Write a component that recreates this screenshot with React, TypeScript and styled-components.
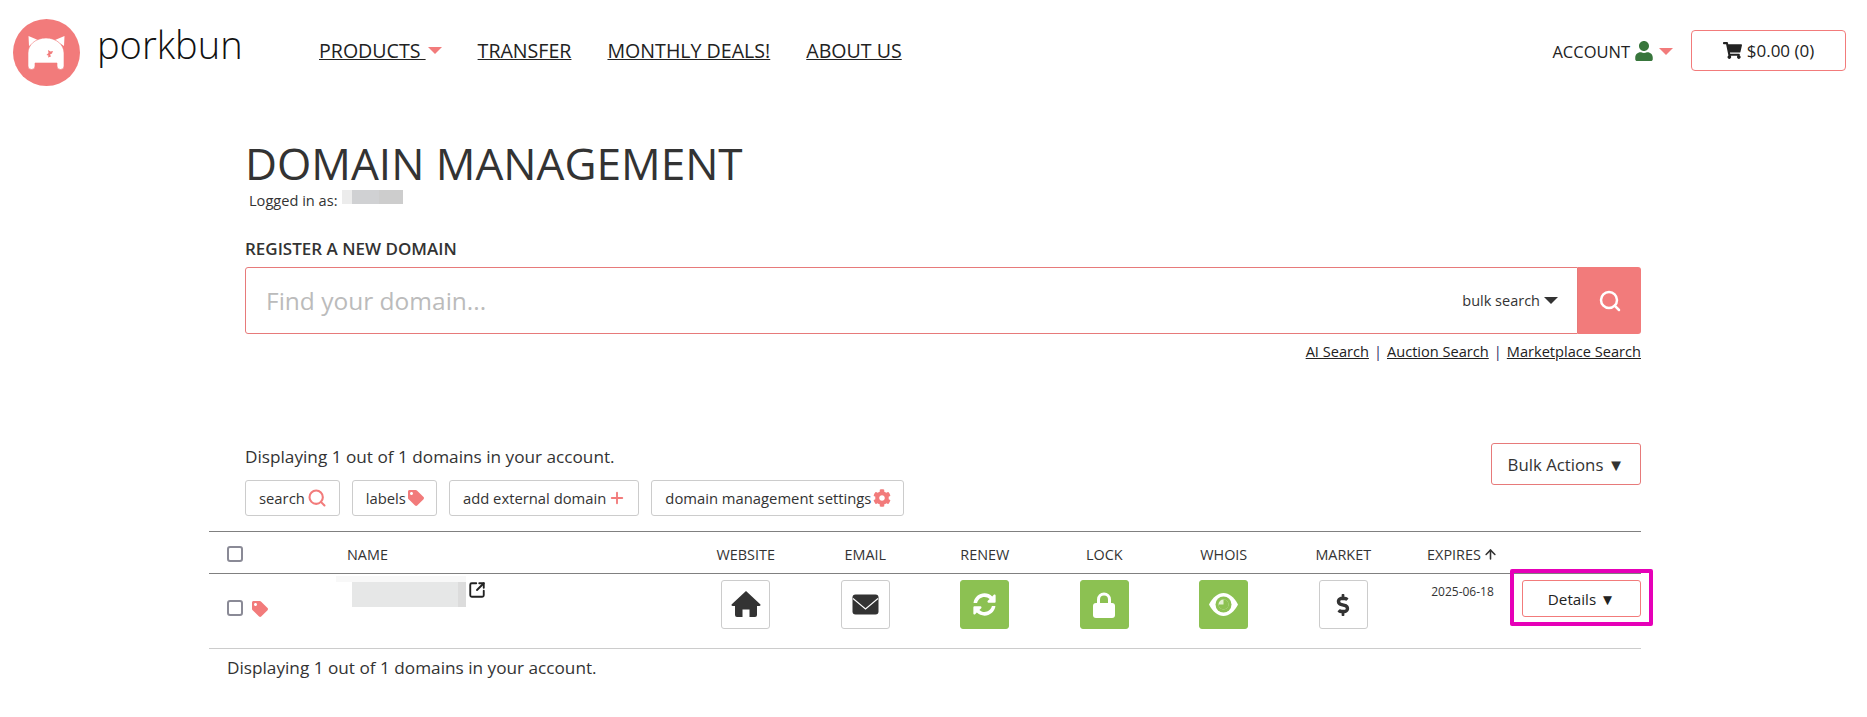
import React from "react";
import styled, { createGlobalStyle } from "styled-components";
import { FaShoppingCart, FaUser, FaTag, FaCog, FaSyncAlt, FaDollarSign } from "react-icons/fa";
import { Search, Plus, ArrowUp, SquareArrowOutUpRight } from "lucide-react";

const PINK = "#f27b7b";
const GREEN = "#8cc152";

const Global = createGlobalStyle`
  html, body { margin: 0; padding: 0; background: #fff; }
  body { font-family: "Open Sans", "Noto Sans", sans-serif; color: #333; font-size: 14px; }
  * { box-sizing: border-box; }
`;

const Page = styled.div`
  width: 1867px;
  height: 717px;
  overflow: hidden;
`;

const Header = styled.header`
  display: flex;
  align-items: center;
  height: 100px;
  padding: 0 21px 0 13px;
`;

const Brand = styled.div`
  display: flex;
  align-items: center;
  gap: 17px;
  width: 306px;
  margin-top: 5px;
`;

const BrandName = styled.span`
  font-size: 38px;
  font-weight: 300;
  color: #111;
  line-height: 1;
  position: relative;
  top: -9px;
`;

const Nav = styled.nav`
  display: flex;
  gap: 36px;
  flex: 1;
`;

const NavLink = styled.a`
  font-size: 19.6px;
  color: #222;
  text-decoration: underline;
  display: inline-flex;
  align-items: center;
`;

const Caret = styled.span<{ $color?: string; $gap?: number }>`
  display: inline-block;
  width: 0;
  height: 0;
  margin-left: ${(p) => p.$gap ?? 0}px;
  border-left: 7px solid transparent;
  border-right: 7px solid transparent;
  border-top: 7px solid ${(p) => p.$color ?? PINK};
`;

const Account = styled.div`
  display: flex;
  align-items: center;
  font-size: 16.5px;
  color: #222;
  margin-right: 18px;
  margin-top: 2px;
  svg { margin: 0 5px 0 4px; color: #38763c; }
`;

const CartButton = styled.button`
  width: 155px;
  height: 41px;
  border: 1px solid ${PINK};
  border-radius: 4px;
  background: #fff;
  color: #222;
  font-family: inherit;
  font-size: 17px;
  display: flex;
  align-items: center;
  justify-content: center;
  gap: 5px;
  padding: 0;
`;

const Main = styled.main`
  padding: 0 226px 0 209px;
`;

const Intro = styled.section`
  padding-left: 36px;
`;

const Title = styled.h1`
  margin: 37px 0 0 0;
  font-size: 44.1px;
  font-weight: 400;
  line-height: 52px;
  color: #333;
`;

const Logged = styled.div`
  display: flex;
  align-items: center;
  height: 18px;
  margin: 2px 0 0 4px;
  font-size: 14.6px;
  gap: 5px;
  color: #333;
`;

const Redacted = styled.span<{ $w: number; $h: number }>`
  display: inline-block;
  width: ${(p) => p.$w}px;
  height: ${(p) => p.$h}px;
  background: linear-gradient(90deg, #ececec 0 16%, #d0d1d3 16% 60%, #cdcdcd 60%);
  position: relative;
  top: -3px;
`;

const Label = styled.div`
  margin-top: 30px;
  font-size: 17px;
  font-weight: 600;
  line-height: 20px;
  color: #333;
`;

const SearchRow = styled.div`
  display: flex;
  margin-top: 8px;
  height: 67px;
`;

const SearchBox = styled.div`
  flex: 1;
  display: flex;
  align-items: center;
  justify-content: space-between;
  border: 1px solid #e77a7a;
  border-radius: 3px 0 0 3px;
  padding: 0 19px 0 20px;
`;

const Placeholder = styled.span`
  font-size: 24.5px;
  color: #bbb;
`;

const Bulk = styled.span`
  font-size: 14.5px;
  color: #333;
  display: flex;
  align-items: center;
  gap: 4px;
  margin-top: -1px;
`;

const SearchButton = styled.button`
  width: 63px;
  border: 0;
  background: ${PINK};
  border-radius: 0 3px 3px 0;
  color: #fff;
  display: flex;
  align-items: center;
  justify-content: center;
  padding: 0;
`;

const SearchLinks = styled.div`
  display: flex;
  justify-content: flex-end;
  gap: 4px;
  margin-top: 7px;
  font-size: 14.6px;
  line-height: 20px;
  color: #333;
  a { color: #222; text-decoration: underline; }
  span { color: #336; padding: 0 1px; }
`;

const Toolbar = styled.div`
  display: flex;
  justify-content: space-between;
  align-items: flex-start;
  margin-top: 81px;
`;

const Status = styled.div`
  font-size: 17.2px;
  line-height: 20px;
  color: #333;
  margin-top: 5px;
`;

const Chips = styled.div`
  display: flex;
  gap: 12px;
  margin-top: 13px;
`;

const Chip = styled.button`
  height: 36px;
  border: 1px solid #ccc;
  border-radius: 3px;
  background: #fff;
  color: #333;
  font-family: inherit;
  font-size: 14.8px;
  display: flex;
  align-items: center;
  gap: 2px;
  padding: 0 12px 0 13px;
  svg { color: ${PINK}; }
`;

const BulkButton = styled.button`
  width: 150px;
  height: 42px;
  margin-top: 1px;
  border: 1px solid #e77a7a;
  border-radius: 3px;
  background: #fff;
  color: #333;
  font-family: inherit;
  font-size: 16.8px;
  padding: 0;
`;

const Columns = `
  display: grid;
  grid-template-columns: 127px 350px repeat(6, 119.5px) 119px 119px;
`;

const TableHead = styled.div`
  ${Columns}
  height: 43px;
  margin-top: 15px;
  border-top: 1px solid #808080;
  border-bottom: 1px solid #808080;
  align-items: center;
  font-size: 14.4px;
  color: #333;
`;

const TableRow = styled.div`
  ${Columns}
  height: 75px;
  border-bottom: 1px solid #ccc;
  align-items: start;
`;

const CheckCell = styled.div<{ $row?: boolean }>`
  display: flex;
  align-items: center;
  gap: 9px;
  padding-left: 18px;
  padding-top: ${(p) => (p.$row ? "24px" : "3px")};
  svg { color: ${PINK}; margin-top: 3px; }
`;

const Check = styled.span`
  display: block;
  width: 16px;
  height: 16px;
  border: 2px solid #8a8a96;
  border-radius: 3px;
  background: #fff;
`;

const NameHead = styled.div`
  padding: 4px 0 0 11px;
`;

const ColHead = styled.div`
  padding-top: 4px;
  text-align: center;
  display: flex;
  align-items: center;
  justify-content: center;
  gap: 2px;
`;

const NameCell = styled.div`
  display: flex;
  align-items: flex-start;
  gap: 2px;
  padding-top: 2px;
  svg { margin-top: 5px; color: #222; }
`;

const BlurName = styled.span`
  display: block;
  width: 130px;
  height: 31px;
  background: linear-gradient(#f8f8f8 0 6px, transparent 6px),
    linear-gradient(90deg, #fff 0 12%, #e6e7e7 12% 94%, #dcdcdc 94%);
`;

const IconCell = styled.div`
  display: flex;
  justify-content: center;
  padding-top: 6px;
`;

const IconButton = styled.div<{ $on?: boolean }>`
  width: 49px;
  height: 49px;
  border: 1px solid ${(p) => (p.$on ? GREEN : "#ccc")};
  border-radius: 3px;
  background: ${(p) => (p.$on ? GREEN : "#fff")};
  color: ${(p) => (p.$on ? "#fff" : "#333")};
  display: flex;
  align-items: center;
  justify-content: center;
`;

const DateCell = styled.div`
  text-align: center;
  font-size: 12px;
  line-height: 16px;
  padding-top: 10px;
  color: #333;
`;

const DetailsButton = styled.button`
  position: relative;
  margin-top: 6px;
  width: 119px;
  height: 37px;
  border: 1px solid ${PINK};
  border-radius: 3px;
  background: #fff;
  color: #222;
  font-family: inherit;
  font-size: 15.2px;
  padding: 0;
  &::after {
    content: "";
    position: absolute;
    top: -12px;
    left: -13px;
    right: -13px;
    bottom: -10px;
    border: 4px solid #e600b8;
    border-radius: 2px;
    pointer-events: none;
  }
`;

const Footer = styled.div`
  margin-top: 9px;
  padding-left: 18px;
  font-size: 17.2px;
  line-height: 20px;
  color: #333;
`;

const PigLogo = () => (
  <svg width="67" height="67" viewBox="0 0 67 67">
    <circle cx="33.5" cy="33.5" r="33.5" fill={PINK} />
    <path d="M15.500 17L25 21L16 27zM51.500 17L42 21L51 27z" fill="#fff" />
    <path
      d="M15 34C15 25.500 23 19 33 19C43 19 51 25.500 51 34V47a3.500 3.500 0 0 1-7 0V44H22V47a3.500 3.500 0 0 1-7 0Z"
      fill="#fff"
      stroke={PINK}
      strokeWidth="0.6"
    />
    <path d="M35 31l2.500 1.500 2.500-.5-1 2.500-2 1 1 2-3 1 .5-2-2-.5 2-2z" fill={PINK} />
  </svg>
);

const HomeIcon = () => (
  <svg width="30" height="27" viewBox="0 0 30 27">
    <path
      d="M15 0L29.500 13.500Q29.800 15 28 15H26V24Q26 26 24 26H18.500V18.500H11.500V26H6Q4 26 4 24V15H2Q.2 15 .5 13.500Z"
      fill="#333"
    />
  </svg>
);

const EnvelopeIcon = () => (
  <svg width="27" height="27" viewBox="0 0 27 27">
    <rect x="0.500" y="3.500" width="26" height="20" rx="3" fill="#333" />
    <path d="M1 7.500L13.500 18L26 7.500" fill="none" stroke="#fff" strokeWidth="1.1" />
  </svg>
);

const LockIcon = () => (
  <svg width="22" height="26" viewBox="0 0 22 26">
    <rect x="0" y="11" width="22" height="15" rx="3" fill="#fff" />
    <path d="M5.500 12V7.500a5.500 5.500 0 0 1 11 0V12" fill="none" stroke="#fff" strokeWidth="3" />
  </svg>
);

const EyeIcon = () => (
  <svg width="29" height="23" viewBox="0 0 29 23">
    <path d="M0 11.500C4 4 9 0 14.500 0S25 4 29 11.500C25 19 20 23 14.500 23S4 19 0 11.500z" fill="#fff" />
    <circle cx="14.500" cy="11.500" r="8" fill={GREEN} />
    <circle cx="14.500" cy="11.500" r="5" fill="#e3f0d3" />
    <path d="M14.500 6.500V11.500H9.500a5 5 0 0 0 5 5 5 5 0 0 0 5-5 5 5 0 0 0-5-5z" fill={GREEN} />
  </svg>
);

export default function App() {
  return (
    <Page>
      <Global />
      <Header>
        <Brand>
          <PigLogo />
          <BrandName>porkbun</BrandName>
        </Brand>
        <Nav>
          <NavLink>
            PRODUCTS&nbsp;
            <Caret $gap={2} />
          </NavLink>
          <NavLink>TRANSFER</NavLink>
          <NavLink>MONTHLY DEALS!</NavLink>
          <NavLink>ABOUT US</NavLink>
        </Nav>
        <Account>
          ACCOUNT
          <FaUser size={20} />
          <Caret />
        </Account>
        <CartButton>
          <FaShoppingCart size={19} />
          $0.00 (0)
        </CartButton>
      </Header>
      <Main>
        <Intro>
          <Title>DOMAIN MANAGEMENT</Title>
          <Logged>
            Logged in as:
            <Redacted $w={61} $h={14} />
          </Logged>
          <Label>REGISTER A NEW DOMAIN</Label>
          <SearchRow>
            <SearchBox>
              <Placeholder>Find your domain...</Placeholder>
              <Bulk>
                bulk search <Caret $color="#333" />
              </Bulk>
            </SearchBox>
            <SearchButton>
              <Search size={24} strokeWidth={2.5} />
            </SearchButton>
          </SearchRow>
          <SearchLinks>
            <a>AI Search</a>
            <span>|</span>
            <a>Auction Search</a>
            <span>|</span>
            <a>Marketplace Search</a>
          </SearchLinks>
          <Toolbar>
            <div>
              <Status>Displaying 1 out of 1 domains in your account.</Status>
              <Chips>
                <Chip>
                  search
                  <Search size={20} strokeWidth={2.5} />
                </Chip>
                <Chip>
                  labels
                  <FaTag size={16} />
                </Chip>
                <Chip>
                  add external domain
                  <Plus size={18} strokeWidth={2.5} />
                </Chip>
                <Chip>
                  domain management settings
                  <FaCog size={18} />
                </Chip>
              </Chips>
            </div>
            <BulkButton>Bulk Actions ▼</BulkButton>
          </Toolbar>
        </Intro>
        <TableHead>
          <CheckCell>
            <Check />
          </CheckCell>
          <NameHead>NAME</NameHead>
          <ColHead>WEBSITE</ColHead>
          <ColHead>EMAIL</ColHead>
          <ColHead>RENEW</ColHead>
          <ColHead>LOCK</ColHead>
          <ColHead>WHOIS</ColHead>
          <ColHead>MARKET</ColHead>
          <ColHead>
            EXPIRES
            <ArrowUp size={15} strokeWidth={2.5} />
          </ColHead>
          <div />
        </TableHead>
        <TableRow>
          <CheckCell $row>
            <Check />
            <FaTag size={16} />
          </CheckCell>
          <NameCell>
            <BlurName />
            <SquareArrowOutUpRight size={18} strokeWidth={2.5} />
          </NameCell>
          <IconCell>
            <IconButton>
              <HomeIcon />
            </IconButton>
          </IconCell>
          <IconCell>
            <IconButton>
              <EnvelopeIcon />
            </IconButton>
          </IconCell>
          <IconCell>
            <IconButton $on>
              <FaSyncAlt size={23} />
            </IconButton>
          </IconCell>
          <IconCell>
            <IconButton $on>
              <LockIcon />
            </IconButton>
          </IconCell>
          <IconCell>
            <IconButton $on>
              <EyeIcon />
            </IconButton>
          </IconCell>
          <IconCell>
            <IconButton>
              <FaDollarSign size={22} />
            </IconButton>
          </IconCell>
          <DateCell>2025-06-18</DateCell>
          <div>
            <DetailsButton>Details ▼</DetailsButton>
          </div>
        </TableRow>
        <Footer>Displaying 1 out of 1 domains in your account.</Footer>
      </Main>
    </Page>
  );
}
